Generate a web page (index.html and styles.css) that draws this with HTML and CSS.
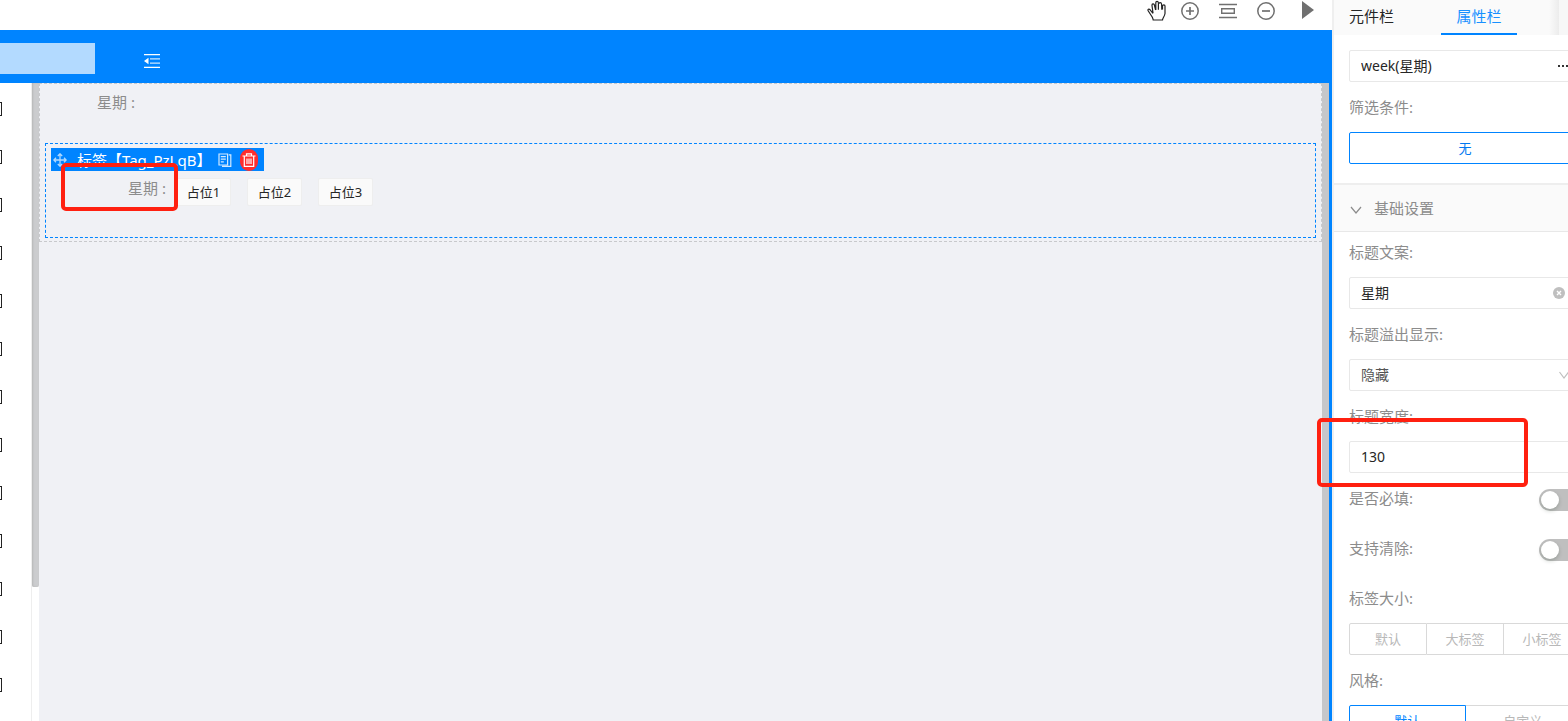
FILE: index.html
```html
<!DOCTYPE html>
<html lang="zh-CN">
<head>
<meta charset="utf-8">
<title>属性栏</title>
<link rel="stylesheet" href="styles.css">
</head>
<body>
<div class="app">
  <div class="workspace">
    <div class="toolbar">
      <button class="tool" aria-label="拖动"><svg width="20" height="22" viewBox="0 0 20 22"><path d="M6 13.500 3.200 9.800C1.800 8.300.4 9.300 1.300 11L5.200 17C5.600 18 6 18.500 6.200 20H15.500C15.600 18 17.600 16.500 18 13.500V6C18 4.500 15.700 4.500 15.500 6V9.500M6 13 5 5.500C4.800 3.600 7 3.300 7.400 5L8.600 10M8.800 10V2.800C8.800 1 11.200 1 11.400 2.800V9.800M11.700 4C12 2 14.400 2.200 14.600 4.200L14.800 9.800" fill="none" stroke="#222" stroke-width="1.2"/></svg></button>
      <button class="tool" aria-label="放大"><svg width="18" height="18" viewBox="0 0 18 18" fill="none" stroke="#707070"><circle cx="9" cy="9" r="8.2" stroke-width="1.5"/><path d="M5 9h8M9 5v8" stroke-width="1.7"/></svg></button>
      <button class="tool" aria-label="适应"><svg width="18" height="16" viewBox="0 0 18 16" fill="none" stroke="#707070" stroke-width="1.4"><path d="M0 1.500h18M0 14.500h18"/><path d="M2.700 5.700h12.600v4.600H2.700z"/></svg></button>
      <button class="tool" aria-label="缩小"><svg width="18" height="18" viewBox="0 0 18 18" fill="none" stroke="#707070"><circle cx="9" cy="9" r="8.2" stroke-width="1.5"/><path d="M5 9h8" stroke-width="1.7"/></svg></button>
      <button class="tool play" aria-label="播放"><svg width="12" height="18" viewBox="0 0 12 18"><path d="M0 0 12 9 0 18z" fill="#707070"/></svg></button>
    </div>
    <header class="appbar">
      <div class="logo"></div>
      <button class="fold" aria-label="收起菜单"><svg width="16" height="14" viewBox="0 0 16 14"><path d="M0 .6h16M0 13.400h16" stroke="#fff" stroke-width="1.3"/><path d="M6 4.800h10M6 9.200h10" stroke="#fff" stroke-width="1.3" opacity=".8"/><path d="M4.500 3.800v6.400L0 7z" fill="#fff"/></svg></button>
    </header>
    <div class="stage">
      <ul class="side">
        <li></li><li></li><li></li><li></li><li></li><li></li><li></li><li></li><li></li><li></li><li></li><li></li><li></li>
      </ul>
      <div class="side-scroll"><div class="side-thumb"></div></div>
      <main class="canvas">
        <section class="container">
          <div class="title first">星期 :</div>
          <div class="selected">
            <div class="tagbar">
              <svg width="14" height="14" viewBox="0 0 14 14" fill="none" stroke="#b3daff" stroke-width="1.3"><path d="M7 1v12M1 7h12M4.800 3 7 .8 9.200 3M4.800 11 7 13.200 9.200 11M3 4.800.8 7 3 9.200M11 4.800 13.200 7 11 9.200"/></svg>
              <span class="tagname">标签【Tag_PzLqB】</span>
              <button class="copy" aria-label="复制"><svg width="14" height="14" viewBox="0 0 14 14" fill="none" stroke="#d3eaff" stroke-width="1.2"><path d="M1 1h8.600v11H1zM2.800 3.600h5M2.800 6.200h5M2.800 8.800h3M10.800 1.800h2v11.600H4"/></svg></button>
              <button class="delete" aria-label="删除"><svg width="14" height="14" viewBox="0 0 14 14" fill="none" stroke="#fff" stroke-width="1.2"><path d="M.5 3h13M4.500 3V.8h5V3M2.300 3v10.300h9.400V3M5 5.500v5.500M7 5.500v5.500M9 5.500v5.500"/></svg></button>
            </div>
            <div class="tagrow">
              <div class="title">星期 :</div>
              <div class="tags"><button>占位1</button><button>占位2</button><button>占位3</button></div>
            </div>
          </div>
        </section>
      </main>
      <div class="canvas-scroll"></div>
    </div>
  </div>

  <aside class="panel">
    <nav class="tabs">
      <button class="tab">元件栏</button>
      <button class="tab active">属性栏</button>
      <span class="fade"></span>
    </nav>
    <form class="form">
      <div class="control">
        <input class="box" value="week(星期)" aria-label="字段">
        <button type="button" class="suffix dots" aria-label="更多"><svg width="12" height="4" viewBox="0 0 12 4" fill="#333"><path d="M0 1h2v2H0zM4 1h2v2H4zM8 1h2v2H8z"/></svg></button>
      </div>
      <div class="field">
        <span class="label">筛选条件:</span>
        <button type="button" class="filter">无</button>
      </div>
    </form>
    <button class="section"><svg width="12" height="12" viewBox="0 0 12 12" fill="none" stroke="#8c8c8c" stroke-width="1.2"><path d="M1 5l5 6 5-6"/></svg>基础设置</button>
    <form class="form settings">
      <div class="field">
        <label class="label" for="text">标题文案:</label>
        <div class="control">
          <input class="box" id="text" value="星期">
          <button type="button" class="suffix clear" aria-label="清空"><svg width="12" height="12" viewBox="0 0 12 12"><circle cx="6" cy="6" r="6" fill="#bfbfbf"/><path d="M4 4l4 4M8 4l-4 4" stroke="#fff" stroke-width="1.4"/></svg></button>
        </div>
      </div>
      <div class="field">
        <label class="label" for="overflow">标题溢出显示:</label>
        <div class="control">
          <select class="box muted" id="overflow"><option>隐藏</option></select>
          <svg class="suffix arrow" width="10" height="8" viewBox="0 0 10 8" fill="none" stroke="#bfbfbf" stroke-width="1.2"><path d="M.5 1 5 7 9.500 1"/></svg>
        </div>
      </div>
      <div class="field">
        <label class="label" for="width">标题宽度:</label>
        <input class="box" id="width" value="130">
      </div>
      <div class="row"><label class="label" for="required">是否必填:</label><input class="switch" type="checkbox" id="required"></div>
      <div class="row"><label class="label" for="clearable">支持清除:</label><input class="switch" type="checkbox" id="clearable"></div>
      <div class="field spaced">
        <span class="label">标签大小:</span>
        <div class="segments"><button type="button">默认</button><button type="button">大标签</button><button type="button">小标签</button></div>
      </div>
      <div class="field">
        <span class="label">风格:</span>
        <div class="segments"><button type="button" class="on">默认</button><button type="button">自定义</button></div>
      </div>
    </form>
  </aside>
  <div class="mark mark-title"></div>
  <div class="mark mark-width"></div>
</div>
</body>
</html>
```
FILE: styles.css
```css
* { box-sizing: border-box; }
body {
  margin: 0;
  font: 15px/22px "Noto Sans", "Noto Sans CJK SC", sans-serif;
  color: #262626;
  background: #fff;
}
button, input, select { font: inherit; color: inherit; margin: 0; }
button { padding: 0; border: 0; background: none; cursor: pointer; }
svg { display: block; flex: none; }
.app {
  position: relative;
  display: grid;
  grid-template-columns: minmax(0, 1fr) 236px;
  height: 100vh;
  overflow: hidden;
}
.workspace { display: flex; flex-direction: column; min-height: 0; }

.toolbar {
  display: flex;
  align-items: center;
  justify-content: flex-end;
  gap: 20px;
  height: 30px;
  padding: 0 18px 8px 0;
}
.tool { display: grid; place-items: center; width: 18px; height: 22px; }
.tool.play { width: 12px; margin-left: 7px; padding-bottom: 2px; }
.tool:first-child { width: 20px; margin-right: -6px; }

.appbar {
  display: flex;
  align-items: center;
  gap: 49px;
  height: 53px;
  padding-top: 4px;
  flex: none;
  background: #0084ff;
}
.logo { width: 95px; height: 31px; background: #b3daff; }
.fold { padding-top: 4px; }

.stage { flex: 1; display: flex; min-height: 0; border-right: 3px solid #0084ff; }
.side {
  width: 32px;
  margin: 0;
  padding: 19px 0 0;
  list-style: none;
  border-right: 1px solid #eee;
  overflow: hidden;
}
.side li {
  width: 2px;
  height: 14px;
  margin-bottom: 34px;
  border: 1px solid #222;
  border-left: 0;
}
.side-scroll { width: 7px; }
.side-thumb { height: 79%; background: #cbccce; border-radius: 0 0 2px 2px; box-shadow: inset 1px 0 2px #b8b8b8; }
.canvas { flex: 1; background: #f0f1f5; }
.canvas-scroll { width: 7px; background: #c6c7ca; }

.container { border: 1px dashed #c8c9cc; padding: 7px 5px 3px; }
.title { color: #8c8c8c; }
.first { padding-left: 52px; height: 52px; }
.selected { border: 1px dashed #0084ff; padding: 4px 5px 31px; }
.tagbar {
  display: flex;
  align-items: center;
  width: 213px;
  height: 23px;
  padding: 0 6px 0 2px;
  background: #0084ff;
  color: #fff;
}
.tagname { margin-left: 10px; white-space: nowrap; flex: 1; }
.copy { margin-right: 8px; }
.delete {
  display: grid;
  place-items: center;
  width: 18px;
  height: 22px;
  border-radius: 9px;
  background: #ff2d2d;
}
.tagrow { display: flex; gap: 10px; padding: 7px 0 0 77px; }
.tagrow .title { margin-top: -1px; }
.tags { display: flex; gap: 16px; }
.tags button {
  width: 55px;
  height: 28px;
  font-size: 13px;
  background: #fafafa;
  border: 1px solid #eee;
  border-radius: 2px;
}

.panel { border-left: 2px solid #efefef; overflow: hidden; background: #fff; }
.tabs { display: flex; gap: 32px; height: 35px; padding-left: 15px; background: #fafafa; }
.tab { padding: 0 0 4px; width: 60px; text-align: left; flex: none; }
.tab.active { width: 76px; padding: 0 0 2px; text-align: center; color: #1890ff; border-bottom: 2px solid #0084ff; }
.fade {
  width: 20px;
  flex: none;
  margin-left: auto;
  border-right: 10px solid #f7f7f7;
  background: linear-gradient(to right, #fafafa, #ececec);
}
.form { width: 262px; padding: 15px; }
.form:first-of-type { padding-bottom: 19px; }
.form.settings { padding-top: 9px; }
.field { display: flex; flex-direction: column; gap: 14px; }
.control + .field, .field + .field { margin-top: 14px; }
.label { color: #8c8c8c; }
.control { position: relative; display: flex; }
.box {
  width: 100%;
  height: 32px;
  padding: 0 11px;
  font-size: 14px;
  background: #fff;
  border: 1px solid #e8e8e8;
  border-radius: 2px;
  appearance: none;
}
input.box { padding-bottom: 2px; }
.muted { color: #555; }
.suffix { position: absolute; right: 11px; top: 0; height: 32px; display: flex; align-items: center; }
.clear { right: 16px; }
.arrow { right: 12px; top: 12px; height: 8px; }
.filter {
  height: 32px;
  font-size: 13px;
  color: #0078f0;
  border: 1px solid #0084ff;
  border-radius: 2px;
}
.section {
  display: flex;
  align-items: center;
  gap: 12px;
  width: 100%;
  height: 49px;
  padding-left: 16px;
  color: #8c8c8c;
  background: #fafafa;
  border-top: 2px solid #eee;
  border-bottom: 1px solid #e8e8e8;
}
.row { display: flex; justify-content: space-between; height: 24px; margin-top: 14px; }
.row + .row, .row + .spaced { margin-top: 26px; }
.switch {
  appearance: none;
  align-self: flex-end;
  width: 42px;
  height: 22px;
  padding: 2px;
  border-radius: 11px;
  background: #bfbfbf;
}
.switch::before {
  content: "";
  display: block;
  width: 18px;
  height: 18px;
  border-radius: 50%;
  background: #fff;
  box-shadow: 0 2px 4px rgba(0, 35, 11, .2);
}
.segments { display: flex; }
.segments button {
  flex: 1;
  height: 32px;
  font-size: 13px;
  color: #b8b8b8;
  border: 1px solid #d9d9d9;
}
.segments button + button { border-left: 0; }
.segments button:first-child { border-radius: 2px 0 0 2px; }
.segments .on { color: #0084ff; border-color: #0084ff; }

.mark { position: absolute; border: 4px solid #ff2010; border-radius: 5px; pointer-events: none; }
.mark-title { left: 61px; top: 163px; width: 117px; height: 48px; }
.mark-width { right: 40px; top: 418px; width: 211px; height: 69px; }
```
